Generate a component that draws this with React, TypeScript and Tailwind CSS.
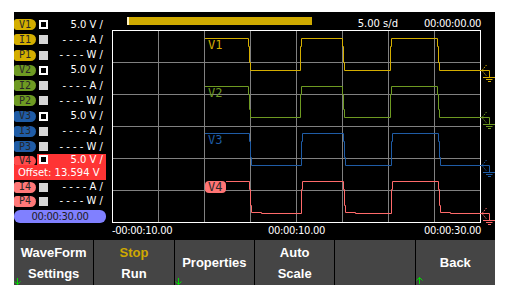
import React from 'react';

type RowDef = { l: string; pill: string; v: boolean; t: string };

const rows: RowDef[] = [
  { l: 'V1', pill: 'bg-[#d4ae00]', v: true, t: '5.0 V /' },
  { l: 'I1', pill: 'bg-[#d4ae00]', v: false, t: '- - - - A /' },
  { l: 'P1', pill: 'bg-[#d4ae00]', v: false, t: '- - - - W /' },
  { l: 'V2', pill: 'bg-[#6e9a22]', v: true, t: '5.0 V /' },
  { l: 'I2', pill: 'bg-[#6e9a22]', v: false, t: '- - - - A /' },
  { l: 'P2', pill: 'bg-[#6e9a22]', v: false, t: '- - - - W /' },
  { l: 'V3', pill: 'bg-[#1f5ca6]', v: true, t: '5.0 V /' },
  { l: 'I3', pill: 'bg-[#1f5ca6]', v: false, t: '- - - - A /' },
  { l: 'P3', pill: 'bg-[#1f5ca6]', v: false, t: '- - - - W /' },
];

function Pill({ label, cls }: { label: string; cls: string }) {
  return (
    <div
      className={`w-[22px] h-[11px] rounded-r-[6px] rounded-l-[3px] flex items-center justify-center text-[10px] leading-none text-[#262626] font-['DejaVu_Sans_Mono',monospace] ${cls}`}
    >
      {label}
    </div>
  );
}

function Box({ v }: { v: boolean }) {
  return v ? (
    <div className="w-[9px] h-[9px] border-2 border-white bg-black shrink-0" />
  ) : (
    <div className="w-[9px] h-[9px] bg-[#d6d6d6] shrink-0" />
  );
}

function LeftPanel() {
  return (
    <div className="w-[92px] flex flex-col pt-[5px] text-white text-[10px] font-['DejaVu_Sans',sans-serif]">
      {rows.map((r) => (
        <div key={r.l} className="h-[15.25px] flex items-center">
          <Pill label={r.l} cls={r.pill} />
          <div className="ml-[3px]">
            <Box v={r.v} />
          </div>
          <div className="flex-1 text-right pr-[3px] leading-none whitespace-pre">{r.t}</div>
        </div>
      ))}
      <div className="h-[11px] flex items-start">
        <div className="pt-[2px]">
          <div className="w-[22px] h-[10px] rounded-r-[6px] rounded-l-[3px] flex items-center justify-center text-[10px] leading-none text-[#262626] font-['DejaVu_Sans_Mono',monospace] bg-[#ff4c4c]">
            V4
          </div>
        </div>
        <div className="ml-[1px] flex-1 h-full bg-[#ff3434] flex items-center pl-[2px]">
          <Box v={true} />
          <div className="flex-1 text-right pr-[3px] leading-none">5.0 V /</div>
        </div>
      </div>
      <div className="h-[15px] bg-[#ff3434] flex items-center pl-[4px] leading-none">Offset: 13.594 V</div>
      <div className="h-[14px] flex items-center">
        <Pill label="I4" cls="bg-[#ff7878]" />
        <div className="ml-[3px]">
          <Box v={false} />
        </div>
        <div className="flex-1 text-right pr-[3px] leading-none whitespace-pre">- - - - A /</div>
      </div>
      <div className="h-[14px] flex items-center">
        <Pill label="P4" cls="bg-[#ff7878]" />
        <div className="ml-[3px]">
          <Box v={false} />
        </div>
        <div className="flex-1 text-right pr-[3px] leading-none whitespace-pre">- - - - W /</div>
      </div>
      <div className="mt-[2px] h-[13px] rounded-[6px] bg-[#8080ff] text-[#1c1c1c] flex items-center justify-center leading-none tracking-[-0.35px]">
        00:00:30.00
      </div>
    </div>
  );
}

function wavePath(hi: number, lo: number, d: number, start: number, sag = false) {
  const fall = (x: number) => {
    let s = `H${x + 0.5}V${hi + 8.5}H${x + 1.5}V${lo - 7.5}H${x + 2.5}V${(sag ? lo - 1 : lo) + 0.5}`;
    if (sag) s += `H${x + 12.5}V${lo + 0.5}`;
    return s;
  };
  const rise = (x: number) => `H${x + 0.5}V${hi + 8.5}H${x + 1.5}V${hi + 0.5}`;
  return (
    `M${start} ${hi + 0.5}` +
    fall(248 + d) +
    rise(300 + d) +
    fall(342 + d) +
    rise(390 + d) +
    fall(437 + d) +
    'H489.5'
  );
}

function Marker({ y, color }: { y: number; color: string }) {
  return (
    <g stroke={color} fill="none" strokeWidth={1}>
      <path d={`M489.5 ${y + 0.5}V${y + 7}`} />
      <path d={`M486.5 ${y - 5}L482 ${y + 0.5}L486.5 ${y + 6}`} strokeDasharray="1.5 1.2" />
      <path d={`M483 ${y + 7.5}H495M486 ${y + 9.5}H492.5M488 ${y + 11.5}H491`} />
    </g>
  );
}

function Chart() {
  const vx = [158, 204, 250, 296, 342, 388, 434];
  const hy = [62, 94, 126, 158, 190];
  return (
    <svg width={389} height={196} viewBox="106 28 389 196" className="block overflow-visible">
      <g stroke="#808080" strokeWidth={1}>
        {vx.map((x) => (
          <line key={x} x1={x + 0.5} y1={30} x2={x + 0.5} y2={222} />
        ))}
        {hy.map((y) => (
          <line key={y} x1={112} y1={y + 0.5} x2={480} y2={y + 0.5} />
        ))}
      </g>
      <rect x={112.5} y={30.5} width={368} height={192} fill="none" stroke="#ffffff" strokeWidth={1} />
      <g fill="none" strokeWidth={1}>
        <path d={wavePath(38, 70, 0, 205)} stroke="#d4ae00" />
        <path d={wavePath(86, 117, 0, 205)} stroke="#6e9a22" />
        <path d={wavePath(133, 165, 1, 205)} stroke="#1f5ca6" />
        <path d={wavePath(181, 213, 1, 226, true)} stroke="#ff6a6a" />
      </g>
      <Marker y={70} color="#d4ae00" />
      <Marker y={117} color="#6e9a22" />
      <Marker y={165} color="#1f5ca6" />
      <Marker y={213} color="#ff6a6a" />
      <g fontFamily="'DejaVu Sans Mono', monospace" fontSize={12}>
        <text x={208} y={49} fill="#d4ae00">V1</text>
        <text x={208} y={97} fill="#6e9a22">V2</text>
        <text x={208} y={144} fill="#1f5ca6">V3</text>
        <rect x={205} y={181} width={21} height={12} rx={4} fill="#ff7474" />
        <text x={208} y={191} fill="#2a2a2a">V4</text>
      </g>
    </svg>
  );
}

function Plot() {
  return (
    <div className="w-[389px] flex flex-col text-white text-[10px] font-['DejaVu_Sans',sans-serif]">
      <div className="h-[16px] flex items-start">
        <div className="ml-[21px] mt-[5px] w-[185px] h-[8px] bg-[#cfaa00] border-l-2 border-[#fff0c0]" />
        <div className="flex-1" />
        <div className="mt-[4px] leading-[16px]">5.00 s/d</div>
        <div className="mt-[4px] ml-[26px] pr-[14px] leading-[16px] tracking-[-0.35px]">00:00:00.00</div>
      </div>
      <Chart />
      <div className="h-[16px] grid grid-cols-[1fr_auto_1fr] pl-[6px] pr-[14px] leading-[14px] tracking-[-0.35px]">
        <div className="justify-self-start">-00:00:10.00</div>
        <div>00:00:10.00</div>
        <div className="justify-self-end">00:00:30.00</div>
      </div>
    </div>
  );
}

function DownArrow() {
  return (
    <svg width={7} height={7} className="absolute left-0 bottom-0" viewBox="0 0 7 7">
      <path d="M3.5 0V6.5M0.5 3.5L3.5 6.5L6.5 3.5" stroke="#00e000" strokeWidth={1} fill="none" />
    </svg>
  );
}

function UpArrow() {
  return (
    <svg width={7} height={7} className="absolute left-0 bottom-[1px]" viewBox="0 0 7 7">
      <path d="M3.5 7V0.5M0.5 3.5L3.5 0.5L6.5 3.5" stroke="#00e000" strokeWidth={1} fill="none" />
    </svg>
  );
}

function Btn({ children, arrow }: { children?: React.ReactNode; arrow?: 'down' | 'up' }) {
  return (
    <div className="flex-1 relative bg-[#454545] flex flex-col items-center justify-center text-white text-[13px] font-bold leading-[21px] font-['Liberation_Sans',Arial,sans-serif]">
      {children}
      {arrow === 'down' && <DownArrow />}
      {arrow === 'up' && <UpArrow />}
    </div>
  );
}

export default function App() {
  return (
    <div className="w-[509px] h-[298px] bg-white pt-[12px] pl-[14px]">
      <div className="w-[481px] h-[273px] bg-black flex flex-col overflow-hidden">
        <div className="flex h-[228px]">
          <LeftPanel />
          <Plot />
        </div>
        <div className="h-[45px] flex gap-[1px] bg-black">
          <Btn arrow="down">
            <div>WaveForm</div>
            <div>Settings</div>
          </Btn>
          <Btn>
            <div className="text-[#cfa800]">Stop</div>
            <div>Run</div>
          </Btn>
          <Btn arrow="down">
            <div>Properties</div>
          </Btn>
          <Btn>
            <div>Auto</div>
            <div>Scale</div>
          </Btn>
          <Btn />
          <Btn arrow="up">
            <div>Back</div>
          </Btn>
        </div>
      </div>
    </div>
  );
}
